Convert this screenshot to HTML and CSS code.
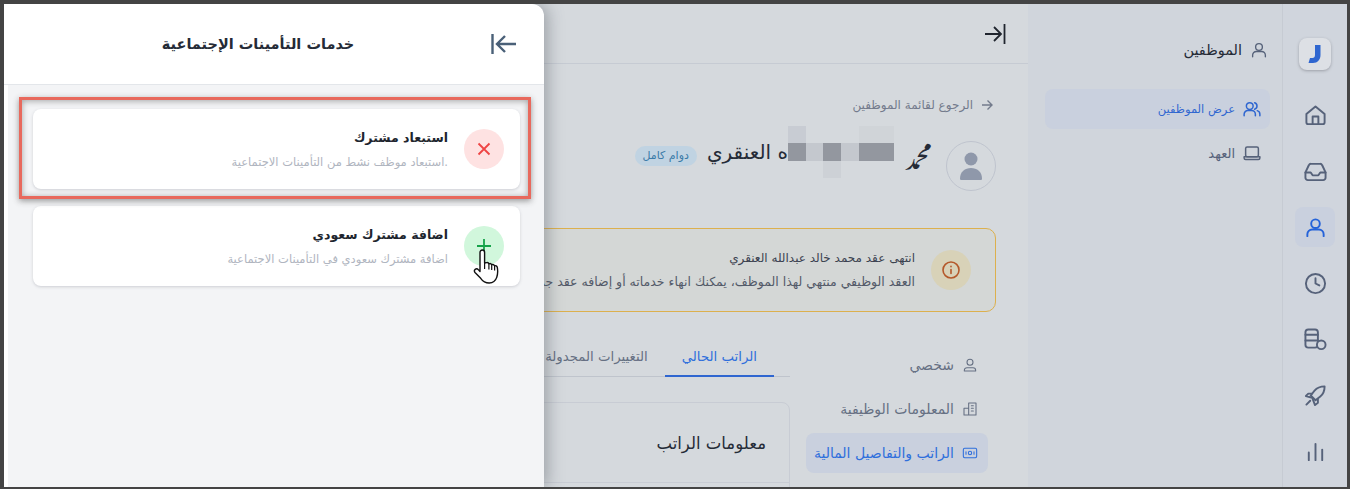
FILE: index.html
```html
<!DOCTYPE html>
<html lang="ar" dir="rtl">
<head>
    <meta charset="UTF-8">
    <meta name="viewport" content="width=device-width, initial-scale=1.0">
    <title>خدمات التأمينات الإجتماعية</title>
    <link rel="stylesheet" href="styles.css">
</head>
<body>
    <div class="frame">
        <aside class="rail">
            <div class="logo">
                <svg width="16" height="20" viewBox="0 0 16 20"><path d="M8 1h5.500v10c0 4.500-3 8-7.500 8H1.500l1.500-5h2.500C7 14 8 13 8 11z" fill="#2f66d0"/></svg>
            </div>
            <a class="rail-item">
                <svg class="icon" viewBox="0 0 24 24"><path d="M2.500 10.500 12 2.500l9.500 8V19a2 2 0 0 1-2 2h-15a2 2 0 0 1-2-2z"/><path d="M9 21v-8h6v8"/></svg>
            </a>
            <a class="rail-item">
                <svg class="icon" viewBox="0 0 24 24"><path d="M1.500 13l3.500-7.500A2.500 2.500 0 0 1 7.300 4h9.400A2.500 2.500 0 0 1 19 5.500l3.500 7.500v5.500a2.500 2.500 0 0 1-2.500 2.500H4a2.500 2.500 0 0 1-2.500-2.500z"/><path d="M1.500 13h5.500l2 3h6l2-3h5.500"/></svg>
            </a>
            <a class="rail-item active">
                <svg class="icon" viewBox="0 0 24 24"><circle cx="12" cy="8" r="4.500"/><path d="M3.500 21v-2a5 5 0 0 1 5-5h7a5 5 0 0 1 5 5v2"/></svg>
            </a>
            <a class="rail-item">
                <svg class="icon" viewBox="0 0 24 24"><circle cx="12" cy="12" r="10"/><path d="M12 6.500V12l4 2"/></svg>
            </a>
            <a class="rail-item">
                <svg class="icon" viewBox="0 0 24 24"><rect x="1.500" y="1.500" width="13" height="19" rx="3"/><path d="M1.500 7h13M1.500 13h13"/><circle class="coin" cx="18" cy="17.500" r="4.500"/></svg>
            </a>
            <a class="rail-item">
                <svg class="icon" viewBox="0 0 24 24"><path d="M21.500 2.500c-4 0-8 1.500-10.500 4.500L7 12l5 5 5-4c3-2.500 4.500-6.500 4.500-10.500z"/><path d="M8.500 10H4.500L2 12.500l6.500 2M14.500 15.500v4L11.500 22l-2.500-6.500M6.500 17.500l-4 4"/></svg>
            </a>
            <a class="rail-item">
                <svg class="icon" viewBox="0 0 24 24"><path d="M5 21v-8M12 21V4M19 21v-11"/></svg>
            </a>
        </aside>

        <nav class="subnav">
            <div class="subnav-title">
                <svg class="icon" viewBox="0 0 24 24"><circle cx="12" cy="8" r="4.500"/><path d="M3.500 21v-2a5 5 0 0 1 5-5h7a5 5 0 0 1 5 5v2"/></svg>
                <span>الموظفين</span>
            </div>
            <a class="subnav-item active">
                <svg class="icon" viewBox="0 0 24 24"><circle cx="9" cy="8" r="4.500"/><path d="M1.500 21v-2a5 5 0 0 1 5-5h5a5 5 0 0 1 5 5v2M15.500 3.700a4.500 4.500 0 0 1 0 8.600M19 14.200a5 5 0 0 1 3.500 4.800v2"/></svg>
                <span>عرض الموظفين</span>
            </a>
            <a class="subnav-item">
                <svg class="icon" viewBox="0 0 24 24"><rect x="3.500" y="4" width="17" height="13" rx="2"/><path d="M1.500 17h21v1.500a2 2 0 0 1-2 2h-17a2 2 0 0 1-2-2z"/></svg>
                <span>العهد</span>
            </a>
        </nav>

        <main class="main">
            <div class="main-bar">
                <svg class="bar-icon" viewBox="0 0 22 22"><path d="M1 11h16M10 4l7 7-7 7"/><path d="M20.500 1v20"/></svg>
            </div>
            <div class="content">
                <a class="back">
                    <svg class="back-icon" viewBox="0 0 12 12"><path d="M1 6h10M6.500 1.500 11 6l-4.500 4.500"/></svg>
                    <span>الرجوع لقائمة الموظفين</span>
                </a>

                <div class="person">
                    <div class="avatar">
                        <svg width="24" height="28" viewBox="0 0 24 28"><circle cx="12" cy="7" r="6.500" fill="#8f98aa"/><path d="M1 26.500C1 20 6 16 12 16s11 4 11 10.500c0 1-.5 1.500-1.500 1.500h-19C1.500 28 1 27.500 1 26.500z" fill="#8f98aa"/></svg>
                    </div>
                    <h1 class="name">
                        <span class="first-name">ﷴ</span>
                        <span class="mosaic">
                            <i class="m4"></i><i class="m4"></i><i class="m0"></i><i class="m0"></i><i class="m0"></i><i class="m5"></i>
                            <i class="m3"></i><i class="m3"></i><i class="m2"></i><i class="m3"></i><i class="m2"></i><i class="m3"></i>
                            <i class="m0"></i><i class="m0"></i><i class="m0"></i><i class="m1"></i><i class="m0"></i><i class="m0"></i>
                        </span>
                        <span>ه العنقري</span>
                    </h1>
                    <span class="badge">دوام كامل</span>
                </div>

                <div class="alert">
                    <div class="alert-icon">
                        <svg width="20" height="20" viewBox="0 0 20 20"><circle cx="10" cy="10" r="8"/><path d="M10 9.500v4M10 6.300v.4"/></svg>
                    </div>
                    <div class="alert-text">
                        <p class="alert-title">انتهى عقد محمد خالد عبدالله العنقري</p>
                        <p class="alert-desc">العقد الوظيفي منتهي لهذا الموظف، يمكنك انهاء خدماته أو إضافه عقد جديد</p>
                    </div>
                </div>

                <div class="details">
                    <ul class="side">
                        <li class="side-item">
                            <svg class="icon" viewBox="0 0 24 24"><circle cx="12" cy="8" r="4.500"/><path d="M3.500 21v-1a4 4 0 0 1 4-4h9a4 4 0 0 1 4 4v1z"/></svg>
                            <span>شخصي</span>
                        </li>
                        <li class="side-item">
                            <svg class="icon" viewBox="0 0 24 24"><path d="M10 21V3h11v18zM10 11H3v10h7M14 7h3M14 11h3M14 15h3"/></svg>
                            <span>المعلومات الوظيفية</span>
                        </li>
                        <li class="side-item active">
                            <svg class="icon" viewBox="0 0 24 24"><rect x="2" y="5" width="20" height="14" rx="2"/><circle cx="12" cy="12" r="2.500"/><path d="M6 10v4M18 10v4"/></svg>
                            <span>الراتب والتفاصيل المالية</span>
                        </li>
                    </ul>
                    <div class="salary">
                        <div class="tabs">
                            <span class="tab active">الراتب الحالي</span>
                            <span class="tab">التغييرات المجدولة</span>
                        </div>
                        <div class="card">
                            <h2 class="card-title">معلومات الراتب</h2>
                        </div>
                    </div>
                </div>
            </div>
        </main>

        <section class="panel">
            <header class="panel-head">
                <h2>خدمات التأمينات الإجتماعية</h2>
                <svg class="panel-back" viewBox="0 0 26 22"><path d="M1.500 1v20"/><path d="M25 11H6M14 3l-8 8 8 8"/></svg>
            </header>
            <div class="panel-body">
                <div class="service">
                    <div class="service-icon red">
                        <svg width="14" height="14" viewBox="0 0 14 14"><path d="M1.500 1.500l11 11M12.500 1.500l-11 11"/></svg>
                    </div>
                    <div>
                        <h3>استبعاد مشترك</h3>
                        <p>.استبعاد موظف نشط من التأمينات الاجتماعية</p>
                    </div>
                </div>
                <div class="service">
                    <div class="service-icon green">
                        <svg width="16" height="16" viewBox="0 0 16 16"><path d="M8 1v14M1 8h14"/></svg>
                    </div>
                    <div>
                        <h3>اضافة مشترك سعودي</h3>
                        <p>اضافة مشترك سعودي في التأمينات الاجتماعية</p>
                    </div>
                </div>
            </div>
            <div class="highlight"></div>
            <svg class="cursor" width="28" height="36" viewBox="0 0 28 36"><path d="M7 3.500C7 2 8 1 9.300 1s2.300 1 2.300 2.500V14l2-.4c1-.2 2 .3 2.300 1.200 1-.5 2.300-.1 2.800.9 1.100-.5 2.400 0 2.900 1 1-.3 2.400.4 2.700 1.700.6 3.500.5 7-.6 10-1 3-3.500 5.600-7.500 5.600-4.500 0-6.500-1.800-8.500-4.700L2 23.500c-.8-1.100-.7-2.400.2-3.100 1-.8 2.400-.5 3.300.5L7 22.500z" fill="#fff" stroke="#111" stroke-width="1.400" stroke-linejoin="round"/><path d="M11.600 14v6M15.900 14.800V20.500M18.700 15.700V21M21.600 16.700V21.500" fill="none" stroke="#111" stroke-width="1.200"/></svg>
        </section>
    </div>
</body>
</html>
```

FILE: styles.css
```css
* {
    box-sizing: border-box;
}

html, body {
    height: 100%;
}

body {
    margin: 0;
    padding: 4px 3px 2px 4px;
    font-family: 'DejaVu Sans', sans-serif;
    background-color: #444444;
    color: #252b37;
    overflow: hidden;
}

h1, h2, h3, p, ul {
    margin: 0;
    padding: 0;
}

.frame {
    position: relative;
    display: flex;
    height: 100%;
    overflow: hidden;
    background-color: #d5d9dd;
}

.icon {
    width: 18px;
    height: 18px;
    flex: none;
    fill: none;
    stroke: currentColor;
    stroke-width: 2;
    stroke-linecap: round;
    stroke-linejoin: round;
}

/* Icon rail */
.rail {
    width: 65px;
    flex: none;
    display: flex;
    flex-direction: column;
    align-items: center;
    gap: 16px;
    padding-top: 34px;
    background-color: #d0d5dd;
    border-left: 1px solid #c6cbd3;
}

.logo {
    width: 32px;
    height: 32px;
    display: flex;
    justify-content: center;
    align-items: center;
    margin-bottom: 9px;
    border-radius: 8px;
    background-color: #dde0e5;
    box-shadow: 0 1px 3px rgba(60, 60, 70, 0.35);
}

.rail-item {
    width: 40px;
    height: 40px;
    display: flex;
    justify-content: center;
    align-items: center;
    border-radius: 8px;
    color: #56627a;
}

.rail-item .icon {
    width: 23px;
    height: 23px;
}

.rail-item .coin {
    fill: #d0d5dd;
}

.rail-item.active {
    background-color: #c9d0de;
    color: #2563d9;
}

/* Section menu */
.subnav {
    width: 254px;
    flex: none;
    padding: 36px 12px 0 17px;
    background-color: #d0d5dc;
}

.subnav-title {
    display: flex;
    align-items: center;
    gap: 8px;
    height: 20px;
    margin-bottom: 29px;
    padding-right: 2px;
    font-size: 14.500px;
    color: #252b37;
}

.subnav-title .icon {
    color: #56627a;
    stroke-width: 1.800;
}

.subnav-item {
    display: flex;
    align-items: center;
    gap: 8px;
    height: 40px;
    margin-bottom: 4px;
    padding-right: 9px;
    border-radius: 8px;
    font-size: 13px;
    color: #56627a;
}

.subnav-item.active {
    background-color: #c9d0de;
    color: #2f66d0;
    font-size: 11.500px;
}

/* Main column */
.main {
    flex: 1;
    min-width: 0;
    overflow: hidden;
}

.main-bar {
    height: 60px;
    display: flex;
    align-items: center;
    padding-right: 22px;
    border-bottom: 1px solid #c6cbd3;
}

.bar-icon {
    width: 22px;
    height: 22px;
    fill: none;
    stroke: #20252e;
    stroke-width: 1.800;
}

.content {
    padding: 32px 32px 0 0;
}

.back {
    display: flex;
    align-items: center;
    gap: 8px;
    height: 18px;
    padding-right: 3px;
    font-size: 12px;
    color: #737b8c;
}

.back-icon {
    width: 12px;
    height: 12px;
    flex: none;
    fill: none;
    stroke: #737b8c;
    stroke-width: 1.400;
}

.person {
    display: flex;
    align-items: flex-start;
    margin-top: 27px;
}

.avatar {
    width: 50px;
    height: 50px;
    flex: none;
    display: flex;
    justify-content: center;
    align-items: center;
    border: 1px solid #bfc4ce;
    border-radius: 50%;
}

.name {
    display: flex;
    align-items: center;
    height: 24px;
    margin-top: -1px;
    margin-right: 15px;
    font-size: 20px;
    font-weight: 500;
    white-space: nowrap;
}

.first-name {
    font-size: 25px;
}

.mosaic {
    display: grid;
    grid-template-columns: repeat(6, 17.700px);
    grid-template-rows: repeat(3, 17.500px);
    flex: none;
    margin-right: 10px;
}

.mosaic i {
    display: block;
}

.m0 { background-color: transparent; }
.m1 { background-color: #cdd1d6; }
.m2 { background-color: #c4c8ce; }
.m3 { background-color: #93979f; }
.m4 { background-color: #d0d4d8; }
.m5 { background-color: #c8ccd3; }

.badge {
    height: 20px;
    margin: 5px 10px 0 0;
    padding: 0 8px;
    border-radius: 10px;
    background-color: #c0d3e2;
    color: #3b7ba8;
    font-size: 11px;
    line-height: 20px;
    white-space: nowrap;
}

.alert {
    display: flex;
    align-items: center;
    gap: 16px;
    height: 84px;
    margin-top: 37px;
    padding-right: 24px;
    border: 1px solid #dcb04e;
    border-radius: 10px;
    background-color: #d4d7d6;
}

.alert-icon {
    width: 40px;
    height: 40px;
    flex: none;
    display: flex;
    justify-content: center;
    align-items: center;
    border-radius: 50%;
    background-color: #d8d2b8;
}

.alert-icon svg {
    fill: none;
    stroke: #b4582a;
    stroke-width: 1.600;
    stroke-linecap: round;
}

.alert-title {
    font-size: 12px;
    line-height: 24px;
    color: #3b4250;
    white-space: nowrap;
}

.alert-desc {
    font-size: 12.500px;
    line-height: 24px;
    color: #535a69;
    white-space: nowrap;
}

.details {
    display: flex;
    gap: 16px;
    margin-top: 33px;
}

.side {
    width: 190px;
    flex: none;
    display: flex;
    flex-direction: column;
    gap: 4px;
    padding-right: 8px;
    list-style: none;
}

.side-item {
    display: flex;
    align-items: center;
    gap: 8px;
    height: 40px;
    padding-right: 10px;
    border-radius: 8px;
    font-size: 14px;
    color: #667083;
    white-space: nowrap;
}

.side-item .icon {
    width: 16px;
    height: 16px;
    stroke-width: 1.600;
}

.side-item.active {
    background-color: #c9d0de;
    color: #2f6fdc;
}

.salary {
    flex: 1;
    min-width: 0;
}

.tabs {
    display: flex;
    height: 32px;
    padding-right: 16px;
    border-bottom: 1px solid #bfc4cc;
}

.tab {
    height: 32px;
    padding: 0 17px;
    font-size: 13.300px;
    line-height: 24px;
    color: #667083;
    white-space: nowrap;
}

.tab.active {
    color: #2f6fdc;
    border-bottom: 2px solid #2f66d0;
}

.card {
    margin-top: 25px;
    height: 120px;
    border: 1px solid #c8ccd4;
    border-radius: 8px;
}

.card-title {
    height: 80px;
    padding: 31px 23px 0 0;
    border-bottom: 1px solid #c8ccd4;
    font-size: 16.500px;
    font-weight: 500;
    color: #252b37;
}

/* Slide-over panel */
.panel {
    position: absolute;
    top: 0;
    bottom: 0;
    left: 0;
    width: 540px;
    display: flex;
    flex-direction: column;
    border-top-right-radius: 12px;
    background-color: #ffffff;
    box-shadow: 4px 0 16px rgba(70, 75, 85, 0.38);
}

.panel-head {
    height: 81px;
    flex: none;
    display: flex;
    flex-direction: row-reverse;
    align-items: center;
    justify-content: space-between;
    padding: 0 27px 0 0;
    border-bottom: 1px solid #e3e6ea;
}

.panel-head h2 {
    flex: 1;
    padding-left: 21px;
    text-align: center;
    font-size: 14.500px;
    font-weight: 700;
    color: #252b37;
}

.panel-back {
    width: 26px;
    height: 22px;
    flex: none;
    fill: none;
    stroke: #4a6078;
    stroke-width: 2.400;
}

.panel-body {
    flex: 1;
    margin-left: 4px;
    padding: 24px 24px 0 25px;
    background-color: #f3f4f6;
}

.service {
    display: flex;
    align-items: center;
    gap: 16px;
    height: 80px;
    margin-bottom: 17px;
    padding-right: 16px;
    border-radius: 8px;
    background-color: #ffffff;
    box-shadow: 0 1px 3px rgba(90, 95, 110, 0.25);
}

.service h3 {
    font-size: 12.500px;
    font-weight: 700;
    line-height: 22px;
    color: #20252e;
}

.service p {
    margin-top: 4px;
    font-size: 11.500px;
    line-height: 18px;
    color: #b0b5c0;
}

.service-icon {
    width: 40px;
    height: 40px;
    flex: none;
    display: flex;
    justify-content: center;
    align-items: center;
    border-radius: 50%;
}

.service-icon svg {
    fill: none;
    stroke-width: 1.800;
}

.service-icon.red {
    background-color: #fee2e2;
}

.service-icon.red svg {
    stroke: #ef4444;
}

.service-icon.green {
    background-color: #d1f7dc;
}

.service-icon.green svg {
    stroke: #16a34a;
}

.highlight {
    position: absolute;
    top: 93px;
    left: 15px;
    width: 512px;
    height: 102px;
    border: 3px solid #e8695d;
    box-shadow: 0 2px 6px rgba(40, 40, 40, 0.45), inset 0 1px 6px rgba(40, 40, 40, 0.4);
    pointer-events: none;
}

.cursor {
    position: absolute;
    top: 245px;
    left: 469px;
}
```
